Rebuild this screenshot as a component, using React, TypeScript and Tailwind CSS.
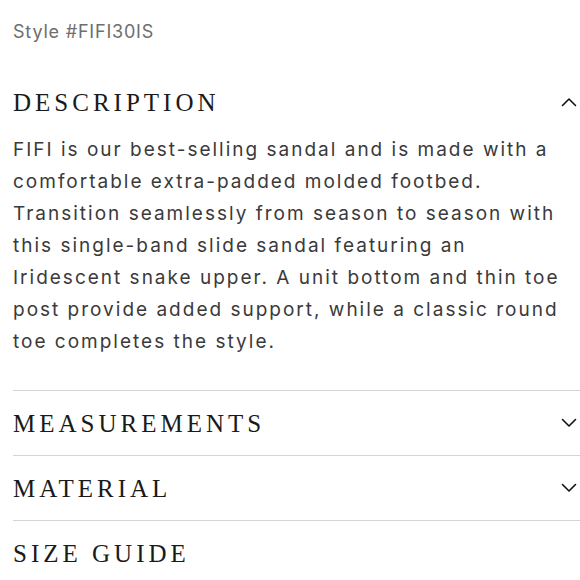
const Chevron = ({ up = false }: { up?: boolean }) => (
  <svg width="16" height="10" viewBox="0 0 16 10" fill="none" className="shrink-0">
    <path
      d={up ? "M1.5 8.5 L8 2 L14.5 8.5" : "M1.5 1.5 L8 8 L14.5 1.5"}
      stroke="#111"
      strokeWidth="1.6"
      strokeLinecap="round"
      strokeLinejoin="round"
    />
  </svg>
);

const Heading = ({ children }: { children: string }) => (
  <h2 className="font-['Liberation_Serif',serif] text-[25px] leading-none tracking-[4px] text-[#1a1a1a]">
    {children}
  </h2>
);

const rows = ["MEASUREMENTS", "MATERIAL"];

const lines = [
  "FIFI is our best-selling sandal and is made with a",
  "comfortable extra-padded molded footbed.",
  "Transition seamlessly from season to season with",
  "this single-band slide sandal featuring an",
  "Iridescent snake upper. A unit bottom and thin toe",
  "post provide added support, while a classic round",
  "toe completes the style.",
];

export default function App() {
  return (
    <div className="w-[580px] h-[580px] overflow-hidden bg-white pl-[13px] font-['Inter',sans-serif]">
      <p className="pt-[20px] text-[18px] leading-[24px] tracking-[0.8px] text-[#6e6e6e]">Style #FIFI30IS</p>

      <div className="mt-[44px] flex items-center justify-between pr-[3px] h-[28px]">
        <Heading>DESCRIPTION</Heading>
        <Chevron up />
      </div>

      <div className="mt-[18px] text-[19px] leading-[32px] tracking-[2px] text-[#3a3a3a] whitespace-nowrap">
        {lines.map((l) => (
          <p key={l}>{l}</p>
        ))}
      </div>

      <div className="mt-[32px]">
        {rows.map((r) => (
          <div key={r} className="flex h-[65px] items-center justify-between border-t border-[#d4d4d4] pr-[3px]">
            <Heading>{r}</Heading>
            <Chevron />
          </div>
        ))}
        <div className="flex h-[65px] items-center border-t border-[#d4d4d4]">
          <Heading>SIZE GUIDE</Heading>
        </div>
      </div>
    </div>
  );
}
